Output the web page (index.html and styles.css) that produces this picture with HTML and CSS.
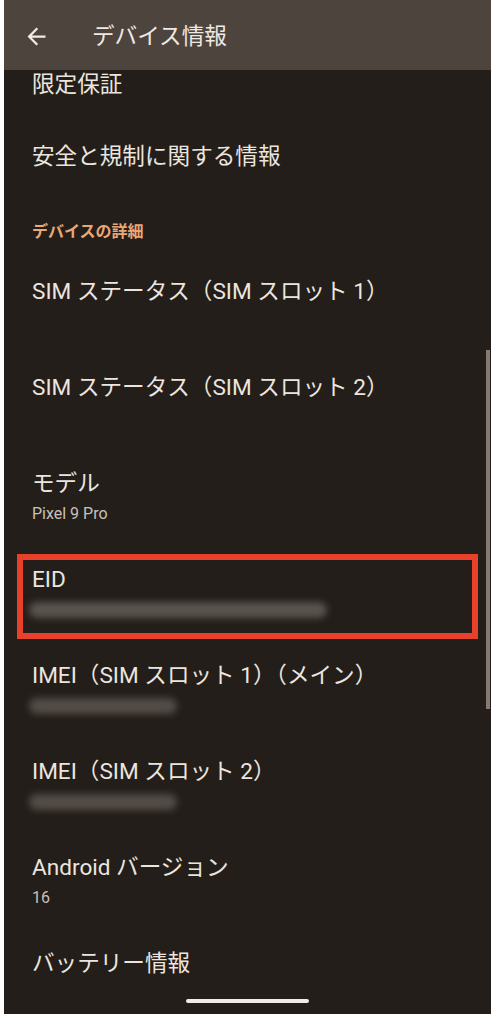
FILE: index.html
```html
<!DOCTYPE html>
<html lang="ja">
<head>
<meta charset="utf-8">
<title>デバイス情報</title>
<link rel="stylesheet" href="styles.css">
</head>
<body>
<div class="phone">
  <header class="appbar">
    <svg class="back" viewBox="0 0 24 24" width="27" height="27" aria-hidden="true">
      <path d="M20 11H7.83l5.59-5.59L12 4l-8 8 8 8 1.41-1.41L7.83 13H20v-2z" fill="#f1ebe6"/>
    </svg>
    <h1 class="title">デバイス情報</h1>
  </header>
  <main class="list">
    <div class="row row-first"><div class="row-title">限定保証</div></div>
    <div class="row"><div class="row-title">安全と規制に関する情報</div></div>
    <div class="category">デバイスの詳細</div>
    <div class="row row-two"><div class="row-title">SIM ステータス（SIM スロット 1）</div><div class="row-summary"></div></div>
    <div class="row row-two"><div class="row-title">SIM ステータス（SIM スロット 2）</div><div class="row-summary"></div></div>
    <div class="row row-two"><div class="row-title">モデル</div><div class="row-summary">Pixel 9 Pro</div></div>
    <div class="row row-two row-marked">
      <div class="row-title">EID</div>
      <div class="row-summary"><span class="redact redact-long"></span></div>
      <div class="mark"></div>
    </div>
    <div class="row row-two"><div class="row-title">IMEI（SIM スロット 1）（メイン）</div><div class="row-summary"><span class="redact redact-short"></span></div></div>
    <div class="row row-two"><div class="row-title">IMEI（SIM スロット 2）</div><div class="row-summary"><span class="redact redact-short"></span></div></div>
    <div class="row row-two"><div class="row-title">Android バージョン</div><div class="row-summary">16</div></div>
    <div class="row row-two"><div class="row-title">バッテリー情報</div><div class="row-summary"></div></div>
  </main>
  <div class="scrollbar"></div>
  <div class="homebar"></div>
</div>
</body>
</html>
```
FILE: styles.css
```css
html, body {
  margin: 0;
  padding: 0;
  background: #ffffff;
}

body {
  font-family: Roboto, "Noto Sans CJK JP", sans-serif;
  color: #ece5df;
}

.phone {
  position: relative;
  width: 487px;
  height: 1014px;
  margin-left: 4px;
  background: #231e1a;
  overflow: hidden;
  display: flex;
  flex-direction: column;
}

.appbar {
  flex: 0 0 70px;
  height: 70px;
  background: #4d443e;
  display: flex;
  align-items: center;
  padding-top: 3px;
  box-sizing: border-box;
}

.back {
  display: block;
  margin-left: 18.5px;
  flex: 0 0 auto;
}

.title {
  margin: 0 0 0 42.5px;
  font-size: 22.6px;
  font-weight: 400;
  line-height: 30px;
  color: #efe8e2;
}

.list {
  display: flex;
  flex-direction: column;
}

.row {
  position: relative;
  padding: 21px 28px;
}

.row-first {
  padding-top: 0;
}

.row-two {
  padding: 20px 28px;
}

.row-title {
  font-size: 22.6px;
  line-height: 30px;
  height: 30px;
  white-space: nowrap;
  color: #ece5df;
}

.row-summary {
  margin-top: 4px;
  height: 22px;
  font-size: 16px;
  line-height: 22px;
  color: #c9c0b9;
  display: flex;
  align-items: center;
}

.category {
  padding: 28px 28px 14px;
  font-size: 16px;
  line-height: 22px;
  font-weight: 700;
  color: #eaa877;
}

.redact {
  display: block;
  height: 16px;
  margin-left: -3px;
  border-radius: 8px;
  background: #5a534e;
  filter: blur(3.5px);
}

.redact-long {
  width: 298px;
}

.redact-short {
  width: 148px;
  background: #534c47;
}

.mark {
  position: absolute;
  left: 13px;
  right: 13px;
  top: 9px;
  bottom: 2px;
  border: 6.5px solid #e8412b;
  pointer-events: none;
}

.scrollbar {
  position: absolute;
  top: 350px;
  right: 1px;
  width: 4px;
  height: 359px;
  background: #857a73;
}

.homebar {
  position: absolute;
  bottom: 11px;
  left: 50%;
  width: 123px;
  height: 4px;
  margin-left: -61.5px;
  border-radius: 2px;
  background: #f1ece7;
}
```
